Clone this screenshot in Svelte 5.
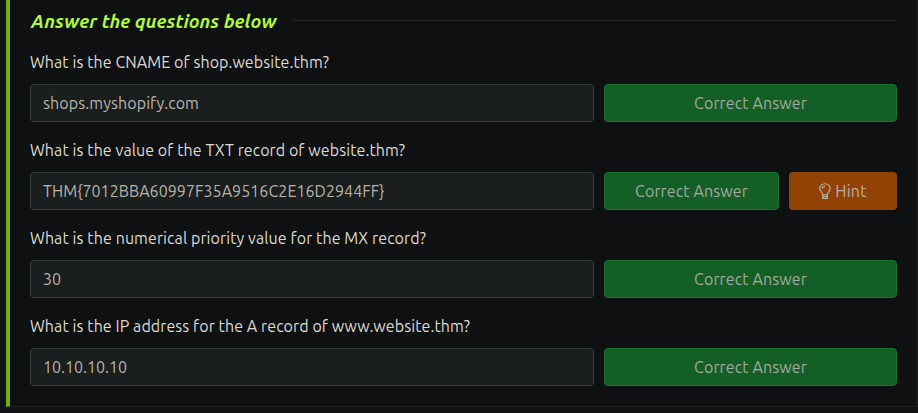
<script>
  const questions = [
    { text: 'What is the CNAME of shop.website.thm?', width: 299, answer: 'shops.myshopify.com', answerWidth: 156 },
    { text: 'What is the value of the TXT record of website.thm?', width: 375, answer: 'THM{7012BBA60997F35A9516C2E16D2944FF}', answerWidth: 341.5, hint: true },
    { text: 'What is the numerical priority value for the MX record?', width: 396, answer: '30', answerWidth: 18 },
    { text: 'What is the IP address for the A record of www.website.thm?', width: 440, answer: '10.10.10.10', answerWidth: 84 }
  ];

  // Spreads the letters of a line so that it fills the given width.
  function fit(node, width) {
    const natural = node.getBoundingClientRect().width;
    node.style.letterSpacing = `${(width - natural) / node.textContent.length}px`;
  }
</script>

<main>
  <section>
    <header>
      <h2><span use:fit={245.5}>Answer the questions below</span></h2>
      <div class="rule"></div>
    </header>
    {#each questions as q}
      <div class="question">
        <p><span use:fit={q.width}>{q.text}</span></p>
        <div class="row">
          <div class="answer"><span use:fit={q.answerWidth}>{q.answer}</span></div>
          <div class="actions">
            <div class="button correct"><span use:fit={113}>Correct Answer</span></div>
            {#if q.hint}
              <div class="button hint">
                <svg viewBox="0 0 12 17" width="12" height="17" aria-hidden="true">
                  <path d="M3.7 11.7C3.7 9.3 .8 8.5 .8 5.6A5.2 4.9 0 0 1 11.2 5.6C11.2 8.5 8.3 9.3 8.3 11.7ZM3.7 11.7V15.5H8.3V11.7M3.7 13.6H8.3" />
                  <path d="M3.3 5.8C3.3 4.3 4.3 3.3 6 3.3" />
                </svg>
                <span use:fit={31.5}>Hint</span>
              </div>
            {/if}
          </div>
        </div>
      </div>
    {/each}
  </section>
</main>

<style>
  :global(body) { background: #111214; }
  main {
    box-sizing: border-box;
    height: 413px;
    padding-left: 6px;
    overflow: hidden;
    font: 16px/24px "Ubuntu", "Noto Sans", sans-serif;
    color: #dbd8d2;
    white-space: nowrap;
  }
  section {
    box-sizing: border-box;
    height: 407px;
    padding: 9px 20px 0;
    background: #0f1012;
    border-left: 4px solid #72b00a;
    border-right: 1px solid #1e2021;
    border-bottom: 1px solid #1e2021;
  }
  header { display: flex; align-items: center; height: 24px; }
  h2 { box-sizing: border-box; margin: 0; padding: 2px 0 0 1px; width: 263px; font-size: 18.7px; line-height: 24px; font-weight: 700; font-style: italic; color: #b1fc36; }
  .rule { flex: 1; height: 1px; margin-bottom: 1px; background: #292a27; }
  .question { padding-top: 17px; height: 71px; }
  p { margin: 0; height: 24px; }
  .row { display: flex; gap: 10px; margin-top: 10px; }
  .answer {
    box-sizing: border-box;
    width: 564px;
    height: 38px;
    padding: 6px 12px;
    border: 1px solid #373c3e;
    border-radius: 4px;
    background: #1a1e1f;
    color: #b9b2a8;
  }
  .actions { display: flex; flex: 1; gap: 10px; }
  .button {
    box-sizing: border-box;
    display: flex;
    align-items: center;
    justify-content: center;
    height: 38px;
    border-radius: 4px;
    color: #a3a79f;
  }
  .correct { flex: 1; background: #145f25; border: 1px solid #18712c; }
  .hint { width: 108px; gap: 4px; background: #934205; color: #bdb0a4; }
  svg { fill: none; stroke: currentColor; stroke-width: 1.15; }
</style>
